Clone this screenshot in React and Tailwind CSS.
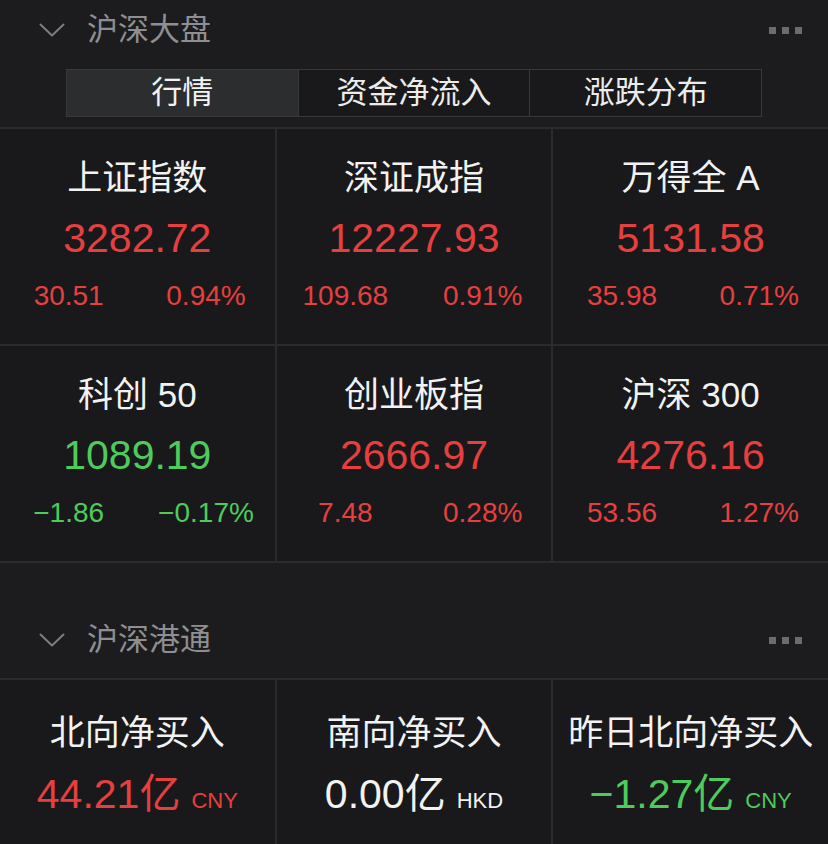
import React from 'react';

const RED = 'text-[#e5403f]';
const GREEN = 'text-[#4fcb5c]';

const INDICES = [
  { name: '上证指数', value: '3282.72', change: '30.51', pct: '0.94%', up: true },
  { name: '深证成指', value: '12227.93', change: '109.68', pct: '0.91%', up: true },
  { name: '万得全 A', value: '5131.58', change: '35.98', pct: '0.71%', up: true },
  { name: '科创 50', value: '1089.19', change: '−1.86', pct: '−0.17%', up: false },
  { name: '创业板指', value: '2666.97', change: '7.48', pct: '0.28%', up: true },
  { name: '沪深 300', value: '4276.16', change: '53.56', pct: '1.27%', up: true }
];

const FLOWS = [
  { name: '北向净买入', value: '44.21', unit: 'CNY', color: RED },
  { name: '南向净买入', value: '0.00', unit: 'HKD', color: 'text-[#f2f2f2]' },
  { name: '昨日北向净买入', value: '−1.27', unit: 'CNY', color: GREEN }
];

const TABS = ['行情', '资金净流入', '涨跌分布'];

const Chevron = () => (
  <svg width="26" height="14" viewBox="0 0 26 14" fill="none" className="shrink-0">
    <path d="M1.5 1.5 L13 12.5 L24.5 1.5" stroke="#7d7d82" strokeWidth="2" strokeLinecap="round" strokeLinejoin="round" />
  </svg>
);

const MoreDots = () => (
  <div className="flex gap-[6px]">
    <span className="w-[7px] h-[7px] bg-[#6c6c70]" />
    <span className="w-[7px] h-[7px] bg-[#6c6c70]" />
    <span className="w-[7px] h-[7px] bg-[#6c6c70]" />
  </div>
);

const SectionHeader = ({ title }) => (
  <div className="flex items-center h-[30px] pl-[39px] pr-[26px]">
    <Chevron />
    <span className="ml-[22px] text-[31px] leading-[30px] text-[#8e8e93]">{title}</span>
    <div className="flex-1" />
    <MoreDots />
  </div>
);

const IndexCell = ({ item }) => {
  const color = item.up ? RED : GREEN;
  return (
    <div className="h-[215px] bg-[#19191b] flex flex-col items-center pt-[29px]">
      <div className="text-[35px] leading-[40px] text-[#f2f2f2] whitespace-nowrap">{item.name}</div>
      <div className={`mt-[16px] text-[41px] leading-[48px] ${color}`}>{item.value}</div>
      <div className={`mt-[18px] w-full grid grid-cols-2 text-[28px] leading-[32px] ${color}`}>
        <span className="text-center">{item.change}</span>
        <span className="text-center">{item.pct}</span>
      </div>
    </div>
  );
};

const FlowCell = ({ item }) => (
  <div className="h-[170px] bg-[#19191b] flex flex-col items-center pt-[33px]">
    <div className="text-[35px] leading-[40px] text-[#f2f2f2] whitespace-nowrap">{item.name}</div>
    <div className={`mt-[17px] flex items-baseline leading-[48px] ${item.color}`}>
      <span className="text-[41px]">{item.value}亿</span>
      <span className="ml-[11px] text-[22px]">{item.unit}</span>
    </div>
  </div>
);

export default function App() {
  return (
    <div
      className="w-[828px] h-[844px] overflow-hidden bg-[#1c1c1e]"
      style={{ fontFamily: '"Liberation Sans", "Noto Sans CJK SC", sans-serif' }}
    >
      <div className="h-[60px] flex flex-col justify-center">
        <SectionHeader title="沪深大盘" />
      </div>

      <div className="mt-[9px] mx-[66px] h-[48px] flex border border-[#38383a]">
        {TABS.map((t, i) => (
          <div
            key={t}
            className={`flex-1 flex items-center justify-center text-[31px] leading-[40px] ${
              i > 0 ? 'border-l border-[#38383a]' : ''
            } ${i === 0 ? 'bg-[#2b2d2f] text-[#f2f2f2]' : 'bg-[#19191b] text-[#ececec]'}`}
          >
            {t}
          </div>
        ))}
      </div>

      <div className="mt-[10px] grid grid-cols-3 gap-[2px] bg-[#2b2b2d] py-[2px]">
        {INDICES.map((item) => (
          <IndexCell key={item.name} item={item} />
        ))}
      </div>

      <div className="h-[115px] pt-[62px]">
        <SectionHeader title="沪深港通" />
      </div>

      <div className="grid grid-cols-3 gap-[2px] bg-[#2b2b2d] pt-[2px]">
        {FLOWS.map((item) => (
          <FlowCell key={item.name} item={item} />
        ))}
      </div>
    </div>
  );
}
